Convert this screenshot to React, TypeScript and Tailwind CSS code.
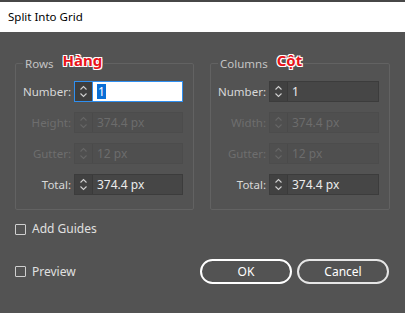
import React from 'react';

const font = { fontFamily: '"Noto Sans", "Liberation Sans", sans-serif' };

function Spinner({ disabled }: { disabled?: boolean }) {
  return (
    <svg width="9" height="15" viewBox="0 0 9 15" fill="none" className={disabled ? 'text-[#666666]' : 'text-[#d0d0d0]'}>
      <path d="M1.5 5.5 L4.5 2.5 L7.5 5.5" stroke="currentColor" strokeWidth="1.1" />
      <path d="M1.5 9.5 L4.5 12.5 L7.5 9.5" stroke="currentColor" strokeWidth="1.1" />
    </svg>
  );
}

type FieldProps = { label: string; value: string; disabled?: boolean; focused?: boolean; inputW: string };

function Field({ label, value, disabled, focused, inputW }: FieldProps) {
  return (
    <div className="flex items-center h-[21px]">
      <span className={`w-[58px] pr-[3px] text-right text-[11.5px] ${disabled ? 'text-[#6e6e6e]' : 'text-[#d8d8d8]'}`}>
        {label}
      </span>
      <div
        className={`flex h-full border ${
          focused ? 'border-[#2f8ff0]' : disabled ? 'border-[#4c4c4c]' : 'border-[#3c3c3c]'
        }`}
      >
        <div
          className={`w-[18px] flex items-center justify-center border-r ${
            focused ? 'bg-[#3e3e3e] border-[#2f8ff0]' : disabled ? 'bg-[#4f4f4f] border-[#4a4a4a]' : 'bg-[#414141] border-[#3a3a3a]'
          }`}
        >
          <Spinner disabled={disabled} />
        </div>
        <div
          className={`${inputW} flex items-center pl-[4px] text-[12px] ${
            focused ? 'bg-white' : disabled ? 'bg-[#4f4f4f] text-[#6c6c6c]' : 'bg-[#464646] text-[#ececec]'
          }`}
        >
          {focused ? <span className="bg-[#0a6fd6] text-white px-[1px] leading-[15px]">{value}</span> : value}
        </div>
      </div>
    </div>
  );
}

function Group({ title, note, prefix, inputW, className }: { title: string; note: string; prefix: string; inputW: string; className: string }) {
  return (
    <fieldset className={`border border-[#626262] rounded-[2px] pl-0 pr-[10px] pt-[10px] pb-[14px] flex flex-col gap-[10px] ${className}`}>
      <legend className="ml-[7px] px-[2px] text-[11.5px] text-[#c4c4c4] leading-[14px]">
        {title}
        <span
          className="ml-[9px] text-[15px] font-bold text-[#e8141b] relative top-[-2px]"
          style={{ textShadow: '0 0 1px #fff, 0 0 1px #fff, 1px 1px 0 #fff, -1px -1px 0 #fff, 1px -1px 0 #fff, -1px 1px 0 #fff' }}
        >
          {note}
        </span>
      </legend>
      <Field label="Number:" value="1" focused={prefix === 'rows'} inputW={inputW} />
      <Field label={prefix === 'rows' ? 'Height:' : 'Width:'} value="374.4 px" disabled inputW={inputW} />
      <Field label="Gutter:" value="12 px" disabled inputW={inputW} />
      <Field label="Total:" value="374.4 px" inputW={inputW} />
    </fieldset>
  );
}

function Check({ label }: { label: string }) {
  return (
    <label className="flex items-center gap-[6px] text-[12px] text-[#e0e0e0]">
      <span className="w-[11px] h-[11px] border border-[#cfcfcf] rounded-[1px]" />
      {label}
    </label>
  );
}

export default function App() {
  return (
    <div className="w-[405px] h-[313px] bg-[#535353] flex flex-col overflow-hidden" style={font}>
      <div className="h-[2px] bg-[#474747]" />
      <header className="h-[30px] bg-white flex items-center px-[8px] text-[11.5px] text-black">Split Into Grid</header>

      <div className="flex-1 px-[15px] pt-[23px] flex flex-col">
        <div className="flex gap-[16px]">
          <Group title="Rows" note="Hàng" prefix="rows" inputW="w-[89px]" className="w-[178px]" />
          <Group title="Columns" note="Cột" prefix="cols" inputW="w-[90px]" className="w-[180px]" />
        </div>

        <div className="mt-[10px]">
          <Check label="Add Guides" />
        </div>

        <div className="mt-[21px] flex items-center justify-between pr-[1px]">
          <Check label="Preview" />
          <div className="flex gap-[5px]">
            <button className="w-[92px] h-[25px] rounded-full border-2 border-white text-white text-[12px]">OK</button>
            <button className="w-[92px] h-[25px] rounded-full border-2 border-[#e6e6e6] text-white text-[12px]">Cancel</button>
          </div>
        </div>
      </div>
    </div>
  );
}
